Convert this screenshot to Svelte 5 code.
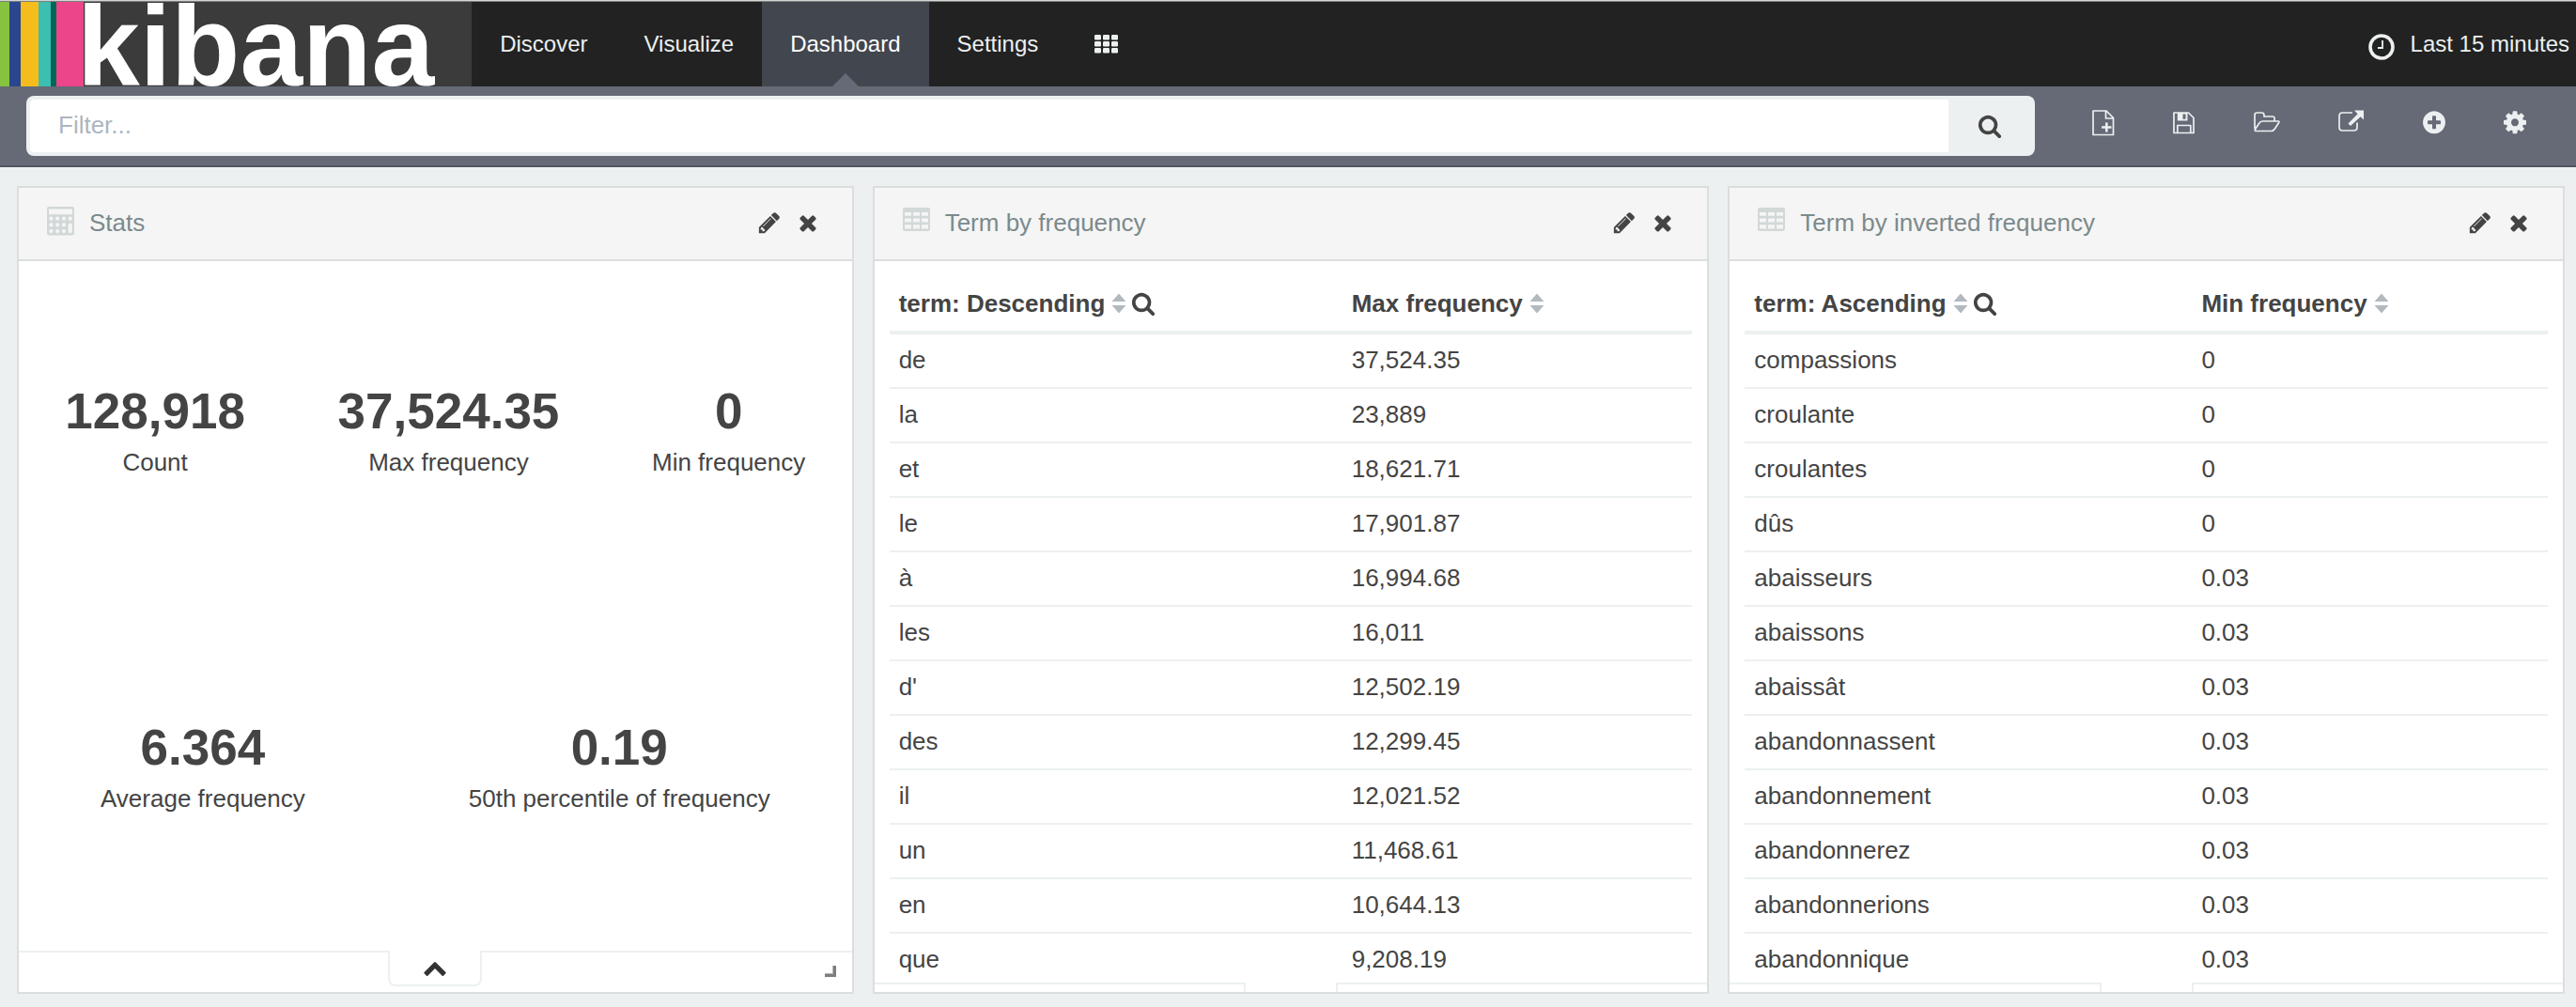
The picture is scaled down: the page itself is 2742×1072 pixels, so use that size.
<script>
  const navItems = [
    { label: 'Discover', href: '#/discover' },
    { label: 'Visualize', href: '#/visualize' },
    { label: 'Dashboard', href: '#/dashboard', active: true },
    { label: 'Settings', href: '#/settings' }
  ];

  const metricRows = [
    [
      { value: '128,918', label: 'Count' },
      { value: '37,524.35', label: 'Max frequency' },
      { value: '0', label: 'Min frequency' }
    ],
    [
      { value: '6.364', label: 'Average frequency' },
      { value: '0.19', label: '50th percentile of frequency' }
    ]
  ];

  const tables = [
    {
      title: 'Term by frequency',
      kind: 'top',
      term: 'term: Descending',
      metric: 'Max frequency',
      rows: [
        ['de', '37,524.35'],
        ['la', '23,889'],
        ['et', '18,621.71'],
        ['le', '17,901.87'],
        ['à', '16,994.68'],
        ['les', '16,011'],
        ["d'", '12,502.19'],
        ['des', '12,299.45'],
        ['il', '12,021.52'],
        ['un', '11,468.61'],
        ['en', '10,644.13'],
        ['que', '9,208.19']
      ]
    },
    {
      title: 'Term by inverted frequency',
      kind: 'bottom',
      term: 'term: Ascending',
      metric: 'Min frequency',
      rows: [
        ['compassions', '0'],
        ['croulante', '0'],
        ['croulantes', '0'],
        ['dûs', '0'],
        ['abaisseurs', '0.03'],
        ['abaissons', '0.03'],
        ['abaissât', '0.03'],
        ['abandonnassent', '0.03'],
        ['abandonnement', '0.03'],
        ['abandonnerez', '0.03'],
        ['abandonnerions', '0.03'],
        ['abandonnique', '0.03']
      ]
    }
  ];

  const glyphs = {
    search:
      'M1216 832q0-185-131.5-316.5t-316.5-131.5-316.5 131.5-131.5 316.5 131.5 316.5 316.5 131.5 316.5-131.5 131.5-316.5zm512 832q0 52-38 90t-90 38q-54 0-90-38l-343-342q-179 124-399 124-143 0-273.5-55.5t-225-150-150-225-55.5-273.5 55.5-273.5 150-225 225-150 273.5-55.5 273.5 55.5 225 150 150 225 55.5 273.5q0 220-124 399l343 343q37 37 37 90z',
    pencil:
      'M491 1536l91-91-235-235-91 91v107h128v128h107zm523-928q0-22-22-22-10 0-17 7l-542 542q-7 7-7 17 0 22 22 22 10 0 17-7l542-542q7-7 7-17zm-54-192l416 416-832 832h-416v-416zm683 96q0 53-37 90l-166 166-416-416 166-165q36-38 90-38 53 0 91 38l235 234q37 39 37 91z',
    times:
      'M1490 1322q0 40-28 68l-136 136q-28 28-68 28t-68-28l-294-294-294 294q-28 28-68 28t-68-28l-136-136q-28-28-28-68t28-68l294-294-294-294q-28-28-28-68t28-68l136-136q28-28 68-28t68 28l294 294 294-294q28-28 68-28t68 28l136 136q28 28 28 68t-28 68l-294 294 294 294q28 28 28 68z',
    chevronUp:
      'M1683 1331l-166 165q-19 19-45 19t-45-19l-531-531-531 531q-19 19-45 19t-45-19l-166-165q-19-19-19-45.5t19-45.5l742-741q19-19 45-19t45 19l742 741q19 19 19 45.5t-19 45.5z',
    plusCircle:
      'M1344 960v-128q0-26-19-45t-45-19h-256v-256q0-26-19-45t-45-19h-128q-26 0-45 19t-19 45v256h-256q-26 0-45 19t-19 45v128q0 26 19 45t45 19h256v256q0 26 19 45t45 19h128q26 0 45-19t19-45v-256h256q26 0 45-19t19-45zm320-64q0 209-103 385.5t-279.5 279.5-385.5 103-385.5-103-279.5-279.5-103-385.5 103-385.5 279.5-279.5 385.5-103 385.5 103 279.5 279.5 103 385.5z',
    cog:
      'M1152 896q0-106-75-181t-181-75-181 75-75 181 75 181 181 75 181-75 75-181zm512-109v222q0 12-8 23t-20 13l-185 28q-19 54-39 91 35 50 107 138 10 12 10 25t-9 23q-27 37-99 108t-94 71q-12 0-26-9l-138-108q-44 23-91 38-16 136-29 186-7 28-36 28h-222q-14 0-24.5-8.5t-11.5-21.5l-28-184q-49-16-90-37l-141 107q-10 9-25 9-14 0-25-11-126-114-165-168-7-10-7-23 0-12 8-23 15-21 51-66.5t54-70.5q-27-50-41-99l-183-27q-13-2-21-12.5t-8-23.5v-222q0-12 8-23t19-13l186-28q14-46 39-92-40-57-107-138-10-12-10-24 0-10 9-23 26-36 98.5-107.5t94.5-71.5q13 0 26 10l138 107q44-23 91-38 16-136 29-186 7-28 36-28h222q14 0 24.5 8.5t11.5 21.5l28 184q49 16 90 37l142-107q9-9 24-9 13 0 25 10 129 119 165 170 7 8 7 22 0 12-8 23-15 21-51 66.5t-54 70.5q26 50 41 98l183 28q13 2 21 12.5t8 23.5z'
  };

  const cells = [0, 1, 2];
</script>

{#snippet glyph(name)}
  <svg class="glyph" viewBox="0 0 1792 1792" aria-hidden="true"><path d={glyphs[name]} /></svg>
{/snippet}

{#snippet sortIcon()}
  <svg class="sort" viewBox="0 0 16 22" aria-hidden="true">
    <path d="M8 .5l7.500 8.500H.5zM.5 13h15L8 21.500z" />
  </svg>
{/snippet}

{#snippet panelActions()}
  <div class="panel-actions">
    <button type="button" aria-label="Edit">{@render glyph('pencil')}</button>
    <button type="button" aria-label="Remove">{@render glyph('times')}</button>
  </div>
{/snippet}

<div class="app">
  <header class="navbar">
    <a class="brand" href="#/">kibana</a>
    <nav>
      {#each navItems as item}
        <a class="nav-link" class:active={item.active} href={item.href}>{item.label}</a>
      {/each}
      <button class="apps" type="button" aria-label="Apps">
        <svg viewBox="0 0 26 20" aria-hidden="true">
          {#each cells as row}
            {#each cells as col}
              <rect x={col * 9} y={row * 7} width="7" height="5.400" rx="1.200" />
            {/each}
          {/each}
        </svg>
      </button>
    </nav>
    <button class="timepicker" type="button">
      <svg viewBox="0 0 28 28" aria-hidden="true">
        <circle cx="14" cy="14" r="12" />
        <path d="M15 7v8h-5" />
      </svg>
      <span>Last 15 minutes</span>
    </button>
  </header>

  <div class="toolbar">
    <form class="query" onsubmit={(e) => e.preventDefault()}>
      <input type="text" aria-label="Filter" placeholder="Filter..." />
      <button type="submit" aria-label="Search">{@render glyph('search')}</button>
    </form>
    <div class="tools">
      <button type="button" aria-label="New dashboard">
        <svg class="line" viewBox="0 0 24 28" aria-hidden="true">
          <path d="M1 1h14l7.500 7.500V26.500H1zM14.500 1v8h8" />
          <path class="fill" d="M14 13.500h2.600v3.700h3.900v2.600h-3.900v3.700H14v-3.700h-3.900v-2.600H14z" />
        </svg>
      </button>
      <button type="button" aria-label="Save dashboard">
        <svg class="line" viewBox="0 0 24 28" aria-hidden="true">
          <path d="M1 3h15.500l5.500 5.500V24.500H1zM4.800 24v-7.500h14V24" />
          <path class="fill" fill-rule="evenodd" d="M4.800 3h10.700v8.500H4.800zM10.500 4.600v5.200h3V4.600z" />
        </svg>
      </button>
      <button type="button" aria-label="Load saved dashboard">
        <svg class="line wide" viewBox="0 0 28 28" aria-hidden="true">
          <path d="M1 20V5.500Q1 3 3.500 3h5Q11 3 11 5.500V7h9q2 0 2 2v3M9.500 12H26q1.500 0 .7 1.500L22.500 20q-1.500 2.500-4 2.500H3Q.5 22.500 1.600 20.500L5.500 14.500Q7 12 9.500 12z" />
        </svg>
      </button>
      <button type="button" aria-label="Share dashboard">
        <svg class="line wide" viewBox="0 0 28 28" aria-hidden="true">
          <path d="M15 3H4.500Q1 3 1 6.500v12Q1 22 4.500 22h12q3.500 0 3.500-3.500V13.500" />
          <path class="fill" d="M17 .5h10v10l-3.300-3.300L13 17l-2.500-2.400L20.700 4.200z" />
        </svg>
      </button>
      <button type="button" aria-label="Add visualization">
        <svg viewBox="128 45 1536 1792" aria-hidden="true"><path d={glyphs.plusCircle} /></svg>
      </button>
      <button type="button" aria-label="Options">
        <svg viewBox="128 45 1536 1792" aria-hidden="true"><path d={glyphs.cog} /></svg>
      </button>
    </div>
  </div>

  <main>
    <section class="panel">
      <div class="panel-head">
        <svg class="kind" viewBox="0 0 30 30" aria-hidden="true">
          <path fill-rule="evenodd" d="M2 0h25q2 0 2 2v26.500q0 2-2 2H2q-2 0-2-2V2Q0 0 2 0zM2 2.500v5.700h25V2.500z" />
          <g class="keys">
            {#each cells as row}
              {#each cells as col}
                <circle cx={4.4 + col * 6.8} cy={12.700 + row * 6.700} r="2.100" />
              {/each}
            {/each}
            <circle cx="24.700" cy="12.700" r="2.100" />
            <rect x="22.600" y="17.500" width="4.200" height="10.800" rx="2.100" />
          </g>
        </svg>
        <h2>Stats</h2>
        {@render panelActions()}
      </div>
      <div class="metrics">
        {#each metricRows as row}
          <div class="metric-row">
            {#each row as m}
              <div class="metric">
                <div class="value">{m.value}</div>
                <div class="label">{m.label}</div>
              </div>
            {/each}
          </div>
        {/each}
      </div>
      <div class="spy open">
        <div class="edge"></div>
        <button class="tab" type="button" aria-label="Show data">{@render glyph('chevronUp')}</button>
        <div class="edge"><span class="resize"></span></div>
      </div>
    </section>

    {#each tables as t}
      <section class="panel">
        <div class="panel-head">
          <svg class="kind" viewBox="0 0 30 30" aria-hidden="true">
            <path
              fill-rule="evenodd"
              d="M2 1h25q2 0 2 2v21q0 2-2 2H2q-2 0-2-2V3Q0 1 2 1zM2 6v3.800h7V6zM11 6v3.800h7V6zM20 6v3.800h7V6zM2 12.500v4h7v-4zM11 12.500v4h7v-4zM20 12.500v4h7v-4zM2 19.200v4.300h7v-4.300zM11 19.200v4.300h7v-4.300zM20 19.200v4.300h7v-4.300z"
            />
          </svg>
          <h2>{t.title}</h2>
          {@render panelActions()}
        </div>
        <div class="table-wrap">
          <table class={t.kind}>
            <thead>
              <tr>
                <th scope="col">
                  <div class="th">
                    <button type="button">{t.term}{@render sortIcon()}</button>
                    <button type="button" aria-label="Filter terms">{@render glyph('search')}</button>
                  </div>
                </th>
                <th scope="col">
                  <div class="th">
                    <button type="button">{t.metric}{@render sortIcon()}</button>
                  </div>
                </th>
              </tr>
            </thead>
            <tbody>
              {#each t.rows as [term, value]}
                <tr><td>{term}</td><td>{value}</td></tr>
              {/each}
            </tbody>
          </table>
        </div>
        <div class="spy">
          <div class="edge"></div>
          <div class="tab"></div>
          <div class="edge"></div>
        </div>
      </section>
    {/each}
  </main>
</div>

<style>
  :global(body) {
    background: #ecf0f1;
  }

  .app {
    box-sizing: border-box;
    display: flex;
    flex-direction: column;
    height: 100vh;
    font-family: 'Liberation Sans', Arial, sans-serif;
    font-size: 26px;
    line-height: 32px;
    color: #444;
  }

  .app :global(*) {
    box-sizing: border-box;
  }

  button {
    display: flex;
    align-items: center;
    justify-content: center;
    margin: 0;
    padding: 0;
    border: 0;
    background: none;
    color: inherit;
    font: inherit;
    cursor: pointer;
  }

  a {
    color: inherit;
    text-decoration: none;
  }

  svg {
    display: block;
    flex: none;
    fill: currentColor;
  }

  .glyph {
    width: 26px;
    height: 26px;
  }

  /* Top navigation */
  .navbar {
    display: flex;
    flex: none;
    height: 92px;
    border-top: 1px solid #d3d7d6;
    box-shadow: inset 0 1px #7d7f7e;
    padding-top: 1px;
    background: #222;
    color: #ecf0f1;
    font-size: 24px;
  }

  .brand {
    height: 90px;
    padding: 0 40px 0 82px;
    overflow: hidden;
    background:
      linear-gradient(
        90deg,
        #86c440 0 10px,
        #2c458f 10px 22px,
        #f4bd1b 22px 41px,
        #3cbeb1 41px 54px,
        #006656 54px 60px,
        #ec4589 60px 89px,
        #3b3b3b 89px
      );
    color: #fff;
    font-size: 120px;
    font-weight: 700;
    line-height: 94px;
  }

  nav {
    display: flex;
    flex: 1;
  }

  .nav-link,
  .apps {
    position: relative;
    display: flex;
    align-items: center;
    height: 90px;
    padding: 0 30px;
  }

  .nav-link.active {
    background: #42464e;
    color: #fff;
  }

  .nav-link.active::after {
    content: '';
    position: absolute;
    bottom: 0;
    left: 50%;
    margin-left: -14px;
    border: 14px solid transparent;
    border-top-width: 0;
    border-bottom-color: #656a76;
  }

  .apps svg {
    width: 26px;
    height: 20px;
  }

  .timepicker {
    gap: 17px;
    padding: 0 7px;
  }

  .timepicker svg {
    width: 28px;
    height: 28px;
    margin-top: 6px;
    fill: none;
    stroke: currentColor;
    stroke-width: 3.6;
  }

  .timepicker path {
    stroke-width: 1.8;
  }

  /* Query bar */
  .toolbar {
    display: flex;
    flex: none;
    gap: 30px;
    height: 86px;
    padding: 10px 22px 10px 28px;
    border-bottom: 2px solid #50545f;
    background: #656a76;
  }

  .query {
    display: flex;
    flex: 1;
    padding: 4px;
    border-radius: 8px;
    background: #ecf0f1;
  }

  .query input {
    flex: 1;
    min-width: 0;
    padding: 0 30px 2px;
    border: 0;
    border-radius: 4px 0 0 4px;
    background: #fff;
    color: #444;
    font: inherit;
    outline: 0;
  }

  .query input::placeholder {
    color: #acb6c0;
    opacity: 1;
  }

  .query button {
    width: 88px;
  }

  .tools {
    display: flex;
    align-items: center;
    padding-bottom: 6px;
    color: #ecf0f1;
  }

  .tools button {
    padding: 0 31px;
  }

  .tools svg {
    width: 24px;
    height: 28px;
  }

  .tools .wide {
    width: 28px;
  }

  .line {
    fill: none;
    stroke: currentColor;
    stroke-width: 1.7;
    stroke-linejoin: round;
  }

  .line .fill {
    fill: currentColor;
    stroke: none;
  }

  /* Dashboard grid */
  main {
    display: grid;
    flex: 1;
    grid-template-columns: repeat(3, minmax(0, 1fr));
    grid-template-rows: minmax(0, 1fr);
    gap: 20px;
    min-height: 0;
    padding: 20px 12px 14px 18px;
  }

  .panel {
    display: flex;
    flex-direction: column;
    min-height: 0;
    border: 2px solid #dcdede;
    background: #fff;
  }

  .panel-head {
    display: flex;
    flex: none;
    align-items: center;
    gap: 15px;
    height: 78px;
    padding: 0 34px 2px 30px;
    border-bottom: 2px solid #dcdede;
    background: #f5f5f5;
  }

  .kind {
    width: 30px;
    height: 30px;
    margin-bottom: 4px;
    overflow: visible;
    fill: #d2d8d7;
  }

  .keys {
    fill: #f5f5f5;
  }

  h2 {
    flex: 1;
    margin: 0;
    color: #7b8a8b;
    font-size: 26px;
    font-weight: 400;
  }

  .panel-actions {
    display: flex;
    gap: 15px;
  }

  /* Metrics */
  .metrics {
    display: flex;
    flex: 1;
    flex-direction: column;
    padding-bottom: 18px;
  }

  .metric-row {
    display: flex;
    flex: 1;
    align-items: center;
    justify-content: space-around;
  }

  .metric {
    text-align: center;
  }

  .value {
    font-size: 53px;
    font-weight: 700;
    line-height: 64px;
  }

  .label {
    margin-top: 6px;
  }

  /* Data tables */
  .table-wrap {
    flex: 1;
    min-height: 0;
    padding: 16px 16px 0;
    overflow: hidden;
  }

  table {
    width: 100%;
    border-collapse: separate;
    border-spacing: 0;
    table-layout: fixed;
  }

  th,
  td {
    padding: 11px 10px 13px;
    border-bottom: 2px solid #ecf0f1;
    text-align: left;
  }

  th {
    padding: 13px 10px;
    border-bottom-width: 4px;
  }

  .top th:first-child {
    width: 56.4%;
  }

  .bottom th:first-child {
    width: 55.7%;
  }

  .th {
    display: flex;
    gap: 5px;
  }

  .th button {
    font-weight: 700;
    line-height: 32px;
  }

  .sort {
    width: 16px;
    height: 22px;
    margin-left: 7px;
    fill: #b2bac0;
  }

  /* Panel footer with the pull-up tab */
  .spy {
    display: flex;
    flex: none;
    height: 10px;
    overflow: hidden;
  }

  .spy.open {
    height: 44px;
  }

  .edge {
    display: flex;
    flex: 1;
    align-items: flex-end;
    justify-content: flex-end;
    border-top: 2px solid #ecf0f1;
  }

  .tab {
    width: 100px;
    height: 38px;
    border: 2px solid #ecf0f1;
    border-top: 0;
    border-radius: 0 0 8px 8px;
    color: #333;
  }

  .resize {
    width: 12px;
    height: 12px;
    margin: 0 17px 16px 0;
    border-right: 3px solid #7d7d7d;
    border-bottom: 3px solid #7d7d7d;
    box-shadow: inset -1px -1px #b5b5b5;
  }
</style>
